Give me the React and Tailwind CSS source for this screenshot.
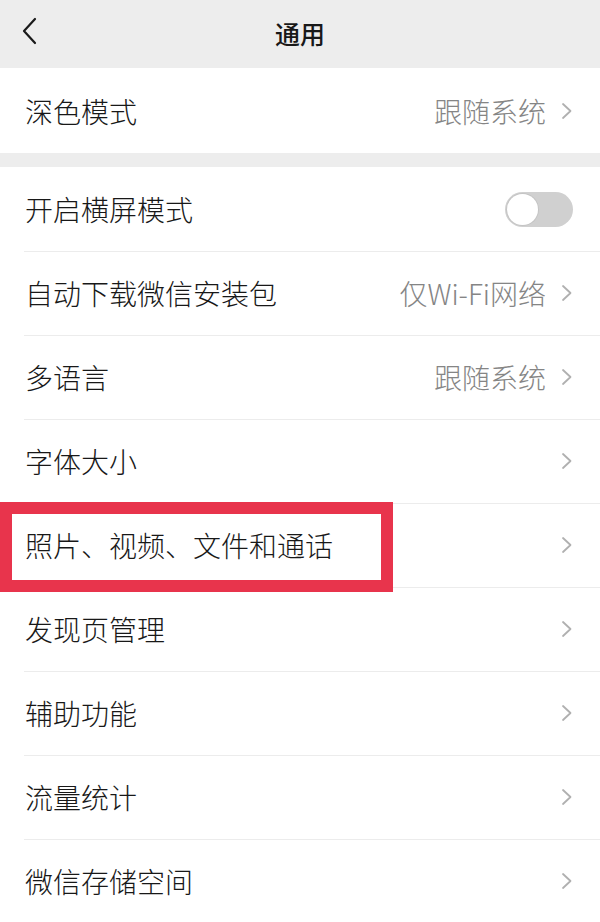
import React from "react";

const rowsTop = [{ label: "深色模式", value: "跟随系统" }];

const rowsMain = [
  { label: "开启横屏模式", toggle: true },
  { label: "自动下载微信安装包", value: "仅Wi-Fi网络" },
  { label: "多语言", value: "跟随系统" },
  { label: "字体大小" },
  { label: "照片、视频、文件和通话", marked: true },
  { label: "发现页管理" },
  { label: "辅助功能" },
  { label: "流量统计" },
  { label: "微信存储空间" },
];

function Chevron() {
  return (
    <svg width="12" height="18" viewBox="0 0 12 18" className="shrink-0">
      <path d="M2 2 L9.5 9 L2 16" fill="none" stroke="#b0b0b0" strokeWidth="1.8" strokeLinecap="round" strokeLinejoin="round" />
    </svg>
  );
}

function Toggle() {
  return (
    <div className="flex h-[35px] w-[68px] items-center rounded-full bg-[#d0d0d0] p-[2px]">
      <div className="h-[31px] w-[31px] rounded-full bg-white shadow-[0_0_0_1px_#c4c4c4]" />
    </div>
  );
}

function Row({ row, first, tall }) {
  return (
    <div className={`relative flex items-center bg-white pl-[25px] pr-[27px] ${tall ? "h-[85px]" : "h-[84px]"}`}>
      {!first ? <div className="absolute left-[24px] right-0 top-0 h-px bg-[#ececec]" /> : null}
      <span className="flex-1 text-[28px] font-light text-[#181818]">{row.label}</span>
      {row.toggle ? (
        <Toggle />
      ) : (
        <div className="flex items-center gap-[15px]">
          {row.value ? <span className="text-[28px] font-light text-[#858585]">{row.value}</span> : null}
          <Chevron />
        </div>
      )}
      {row.marked ? (
        <div className="absolute left-0 top-[-1px] z-10 h-[90px] w-[393px] border-[12px] border-[#e8344c]" />
      ) : null}
    </div>
  );
}

export default function App() {
  return (
    <div
      className="h-[922px] w-[600px] overflow-hidden bg-[#ededed]"
      style={{ fontFamily: '"Noto Sans CJK SC", "Noto Sans", sans-serif' }}
    >
      <header className="relative flex h-[68px] items-center justify-center">
        <svg width="16" height="28" viewBox="0 0 16 28" className="absolute left-[21px] top-[17px]">
          <path d="M14 2 L3 14 L14 26" fill="none" stroke="#1a1a1a" strokeWidth="2.2" strokeLinecap="round" strokeLinejoin="round" />
        </svg>
        <h1 className="text-[25px] font-medium text-[#181818]">通用</h1>
      </header>

      <section className="mb-[14px]">
        {rowsTop.map((row, i) => (
          <Row key={row.label} row={row} first={i === 0} tall />
        ))}
      </section>

      <section>
        {rowsMain.map((row, i) => (
          <Row key={row.label} row={row} first={i === 0} />
        ))}
      </section>
    </div>
  );
}
